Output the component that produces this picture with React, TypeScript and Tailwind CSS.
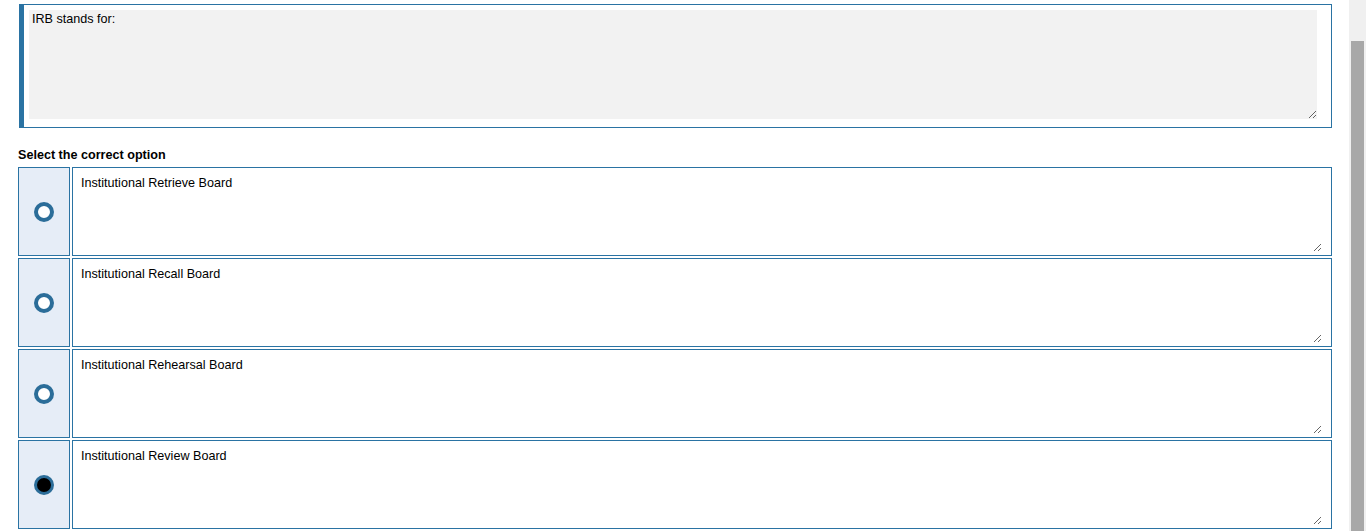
import React, { useState } from 'react';

const options = [
  'Institutional Retrieve Board',
  'Institutional Recall Board',
  'Institutional Rehearsal Board',
  'Institutional Review Board',
];

const Radio: React.FC<{ checked: boolean }> = ({ checked }) =>
  checked ? (
    <span className="w-5 h-5 rounded-full border-[3px] border-[#2b6d99] bg-black" />
  ) : (
    <span className="w-5 h-5 rounded-full border-4 border-[#2b6d99] bg-white" />
  );

const App: React.FC = () => {
  const [selected, setSelected] = useState(3);

  return (
    <div className="flex h-[531px] overflow-hidden bg-white font-['Liberation_Sans',Arial,sans-serif] text-[12.6px] text-black">
      <div className="flex-1 pt-1 pl-[18px] pr-[17px]">
        <div className="ml-px h-[124px] border border-l-[5px] border-[#2a73a3] pt-[5px] pl-[5px] pr-[14px] pb-[8px]">
          <textarea
            readOnly
            defaultValue="IRB stands for:"
            className="block w-full h-[109px] bg-[#f2f2f2] px-[3px] py-[2px] leading-[14px] outline-none"
          />
        </div>

        <div className="mt-5 mb-[5px] font-bold leading-[14px]">Select the correct option</div>

        <div className="flex flex-col gap-[2px]">
          {options.map((opt, i) => (
            <div key={opt} className="flex gap-[2px] h-[89px]">
              <button
                onClick={() => setSelected(i)}
                className="w-[52px] shrink-0 flex items-center justify-center bg-[#e6edf7] border border-[#2a73a3]"
              >
                <Radio checked={selected === i} />
              </button>
              <div className="flex-1 border border-[#2a73a3] bg-white pr-[9px] pb-[3px]">
                <textarea
                  readOnly
                  defaultValue={opt}
                  className="block w-full h-full bg-white pl-2 pt-2 leading-[14px] outline-none"
                />
              </div>
            </div>
          ))}
        </div>
      </div>

      <div className="w-[17px] shrink-0 bg-[#f0f0f0] pt-[41px] px-[2px]">
        <div className="h-full bg-[#a8a8a8]" />
      </div>
    </div>
  );
};

export default App;
